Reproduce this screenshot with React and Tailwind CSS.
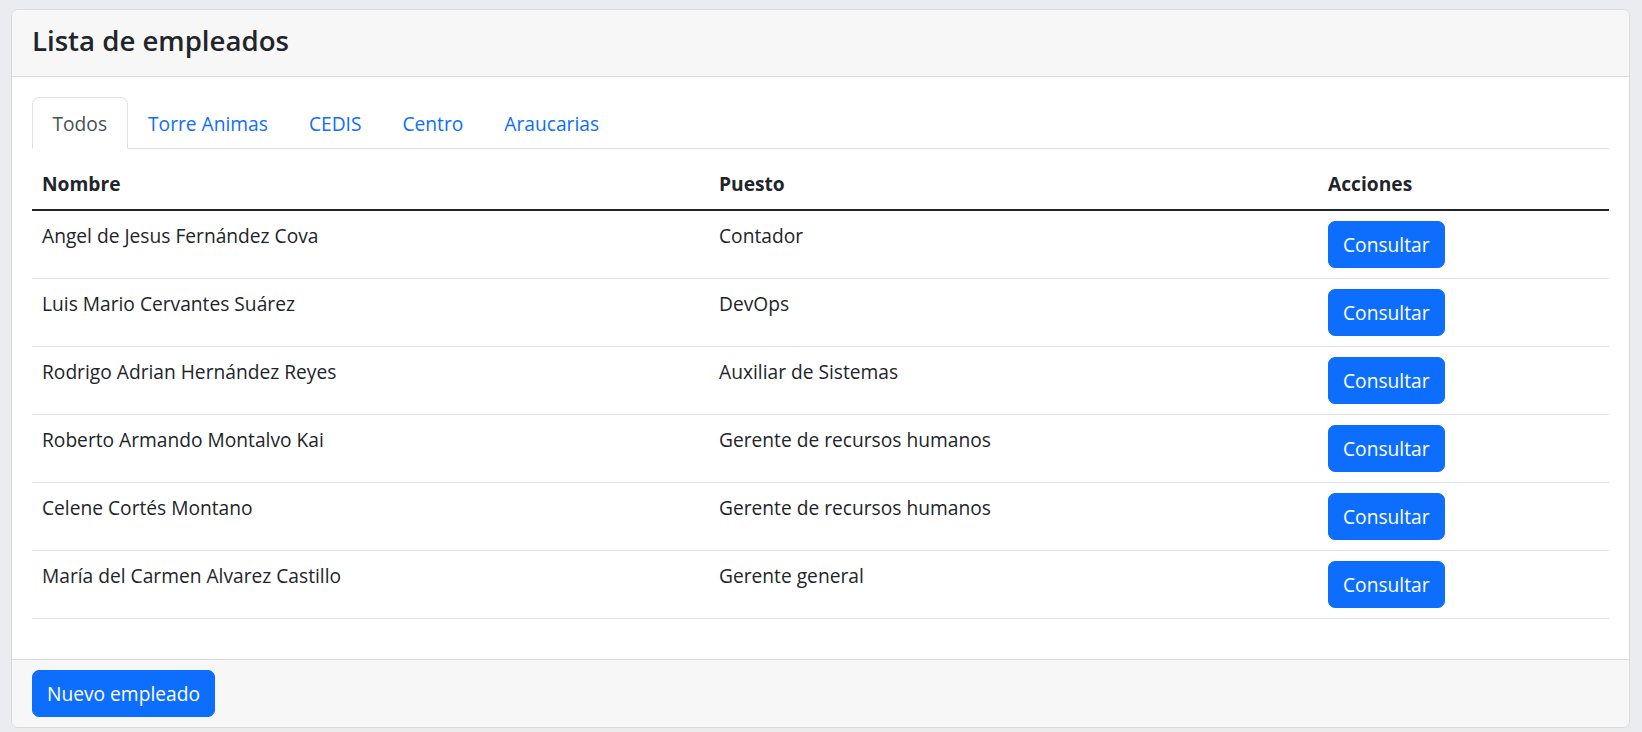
import React from "react";

const empleados = [
  ["Angel de Jesus Fernández Cova", "Contador"],
  ["Luis Mario Cervantes Suárez", "DevOps"],
  ["Rodrigo Adrian Hernández Reyes", "Auxiliar de Sistemas"],
  ["Roberto Armando Montalvo Kai", "Gerente de recursos humanos"],
  ["Celene Cortés Montano", "Gerente de recursos humanos"],
  ["María del Carmen Alvarez Castillo", "Gerente general"],
];

const tabs = ["Todos", "Torre Animas", "CEDIS", "Centro", "Araucarias"];

export default function App() {
  return (
    <div
      className="min-h-[732px] bg-[#eaecef] pt-[9px] pl-[11px] pr-[12px] text-[#212529] text-[19.2px] leading-[30px]"
      style={{ fontFamily: '"Open Sans", "Noto Sans", sans-serif' }}
    >
      <div className="bg-white border border-[#d9dadb] rounded-[7px] overflow-hidden">
        <div className="bg-[#f7f7f7] border-b border-[#d9dadb] px-[20px] pt-[12px] pb-[18px]">
          <h4 className="m-0 text-[27.6px] leading-[36px] font-semibold">Lista de empleados</h4>
        </div>

        <div className="px-[20px] pt-[20px] pb-[20px]">
          <ul className="flex border-b border-[#dee2e6] m-0 p-0 list-none">
            {tabs.map((t, i) => (
              <li key={t} className="-mb-px">
                <a
                  href="#"
                  className={
                    i === 0
                      ? "block px-[19.5px] pt-[10.5px] pb-[9.5px] border border-[#dee2e6] border-b-white rounded-t-[7px] bg-white text-[#495057] no-underline"
                      : "block px-[19.5px] pt-[10.5px] pb-[9.5px] border border-transparent text-[#0d6efd] no-underline"
                  }
                >
                  {t}
                </a>
              </li>
            ))}
          </ul>

          <table className="w-full mt-[10px] mb-[20px] border-collapse table-fixed">
            <colgroup>
              <col className="w-[677px]" />
              <col className="w-[609px]" />
              <col />
            </colgroup>
            <thead>
              <tr className="border-b-[2.5px] border-[#212529]">
                <th className="text-left font-bold px-[10px] py-[10px] align-bottom">Nombre</th>
                <th className="text-left font-bold px-[10px] py-[10px] align-bottom">Puesto</th>
                <th className="text-left font-bold px-[10px] py-[10px] align-bottom">Acciones</th>
              </tr>
            </thead>
            <tbody>
              {empleados.map(([n, p]) => (
                <tr key={n} className="border-b border-[#dee2e6]">
                  <td className="px-[10px] pt-[10px] pb-[10px] align-top">{n}</td>
                  <td className="px-[10px] pt-[10px] pb-[10px] align-top">{p}</td>
                  <td className="px-[10px] pt-[10px] pb-[10px] align-top">
                    <button className="bg-[#0d6efd] text-white border border-[#0d6efd] rounded-[7px] px-[14px] py-[7.5px] leading-[30px] text-[19.2px]">
                      Consultar
                    </button>
                  </td>
                </tr>
              ))}
            </tbody>
          </table>
        </div>

        <div className="bg-[#f7f7f7] border-t border-[#d9dadb] px-[19.5px] py-[10px]">
          <button className="bg-[#0d6efd] text-white border border-[#0d6efd] rounded-[7px] px-[14.5px] py-[7.5px] leading-[30px] text-[19.2px]">
            Nuevo empleado
          </button>
        </div>
      </div>
    </div>
  );
}
